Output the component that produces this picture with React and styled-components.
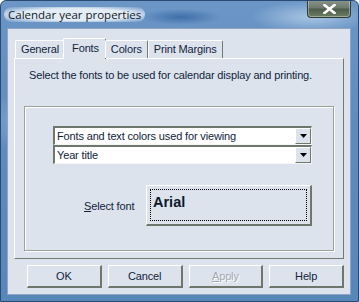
import React from 'react';
import styled, { createGlobalStyle } from 'styled-components';

const GlobalStyle = createGlobalStyle`
  html, body {
    margin: 0;
    padding: 0;
    background: #ffffff;
  }
  body {
    font-family: Tahoma, "Liberation Sans", Arial, sans-serif;
    font-size: 11px;
    letter-spacing: -0.15px;
    color: #000;
  }
`;

const Window = styled.div`
  position: relative;
  width: 359px;
  height: 302px;
  box-sizing: border-box;
  border: 1px solid #2b4a72;
  border-radius: 6px 6px 0 0;
  background:
    radial-gradient(ellipse 40px 8px at 180px 16px, #3f6ea8 0%, rgba(63, 110, 168, 0) 100%),
    radial-gradient(ellipse 60px 16px at 310px 16px, #a9c6e4 0%, rgba(169, 198, 228, 0) 100%),
    radial-gradient(ellipse 90px 30px at 40px 120px, #7ea4cf 0%, rgba(126, 164, 207, 0) 100%),
    linear-gradient(180deg, #6b96c6 0%, #5f8cbe 40%, #5786b9 100%);
  display: flex;
  flex-direction: column;
  overflow: hidden;
`;

const TitleBar = styled.div`
  height: 27px;
  display: flex;
  align-items: flex-start;
  justify-content: space-between;
  padding-left: 3px;
`;

const Title = styled.div`
  margin-top: 6px;
  font-family: "Open Sans", "Noto Sans", sans-serif;
  font-size: 11.5px;
  letter-spacing: 0;
  color: #0f1a28;
  padding: 0 4px;
  border-radius: 8px;
  background: radial-gradient(ellipse at center, #e4ecf5 55%, rgba(228, 236, 245, 0) 100%);
`;

const CloseButton = styled.div`
  width: 44px;
  height: 18px;
  margin-right: 7px;
  margin-top: -1px;
  box-sizing: border-box;
  border: 1px solid #2f3a34;
  border-top: none;
  border-radius: 0 0 4px 4px;
  background: linear-gradient(180deg, #8c968c 0%, #6d7a6c 45%, #4e5d4c 55%, #6b7f62 100%);
  box-shadow: inset 0 0 0 1px rgba(255, 255, 255, 0.35);
  display: flex;
  align-items: center;
  justify-content: center;
`;

const Client = styled.div`
  flex: 1;
  margin: 0 7px 6px 6px;
  background: #dde3ed;
  border: 1px solid #8fa5c2;
  display: flex;
  flex-direction: column;
  padding: 8px 6px 0 6px;
`;

const TabStrip = styled.div`
  display: flex;
  align-items: flex-end;
  height: 21px;
  padding-left: 1px;
  position: relative;
  z-index: 1;
`;

const Tab = styled.div`
  box-sizing: border-box;
  height: ${(p) => (p.$active ? '21px' : '18px')};
  padding: ${(p) => (p.$active ? '2px 6px 0 8px' : '1px 5px 0 5px')};
  margin: ${(p) => (p.$active ? '0 -1px -1px -2px' : '0')};
  border-top: 1px solid #ffffff;
  border-left: 1px solid #ffffff;
  border-right: 1px solid #717b71;
  border-radius: 2px 2px 0 0;
  background: #dde3ed;
  color: #10243c;
  font-size: 11px;
  line-height: 15px;
  white-space: nowrap;
`;

const Panel = styled.div`
  height: 201px;
  box-sizing: border-box;
  border-top: 1px solid #ffffff;
  border-left: 1px solid #ffffff;
  border-right: 1px solid #717b71;
  border-bottom: 1px solid #717b71;
  padding: 9px 9px 7px 9px;
  display: flex;
  flex-direction: column;
`;

const Description = styled.div`
  padding-left: 5px;
  color: #10243c;
  line-height: 14px;
`;

const GroupBox = styled.div`
  margin-top: 24px;
  flex: 1;
  border: 1px solid #9aa29a;
  box-shadow: 1px 1px 0 #ffffff, inset 1px 1px 0 #ffffff;
  padding: 19px 21px 0 28px;
  display: flex;
  flex-direction: column;
`;

const Combo = styled.div`
  height: 19px;
  box-sizing: border-box;
  background: #ffffff;
  border-top: 2px solid #6d776c;
  border-left: 2px solid #6d776c;
  border-right: 1px solid #f4f6f8;
  border-bottom: 1px solid #f4f6f8;
  display: flex;
  align-items: center;
`;

const ComboText = styled.div`
  flex: 1;
  padding-left: 2px;
  color: #10243c;
  white-space: nowrap;
  overflow: hidden;
`;

const ComboButton = styled.div`
  width: 16px;
  height: 16px;
  box-sizing: border-box;
  background: #dde3ed;
  border-top: 1px solid #ffffff;
  border-left: 1px solid #ffffff;
  border-right: 1px solid #6d776c;
  border-bottom: 1px solid #6d776c;
  display: flex;
  align-items: center;
  justify-content: center;
`;

const FontRow = styled.div`
  display: flex;
  align-items: center;
  margin-top: 21px;
  padding-left: 2px;
`;

const FontLabel = styled.div`
  width: 91px;
  padding-left: 29px;
  box-sizing: border-box;
  color: #10243c;
  u {
    text-decoration: underline;
  }
`;

const FontButton = styled.div`
  width: 166px;
  height: 41px;
  box-sizing: border-box;
  border-top: 1px solid #ffffff;
  border-left: 1px solid #ffffff;
  border-right: 2px solid #6d776c;
  border-bottom: 2px solid #6d776c;
  padding: 3px;
  display: flex;
`;

const FocusRing = styled.div`
  flex: 1;
  border: 1px dotted #000;
  display: flex;
  align-items: flex-start;
  padding: 4px 0 0 2px;
  font-family: "Liberation Sans", Arial, sans-serif;
  font-weight: bold;
  font-size: 14.5px;
  letter-spacing: 0;
  color: #0c1a2c;
`;

const ButtonRow = styled.div`
  display: flex;
  gap: 6px;
  margin-top: 6px;
  padding-left: 13px;
`;

const DialogButton = styled.div`
  width: 75px;
  height: 23px;
  box-sizing: border-box;
  border-top: 1px solid #ffffff;
  border-left: 1px solid #ffffff;
  border-right: 2px solid #6d776c;
  border-bottom: 2px solid #6d776c;
  display: flex;
  align-items: center;
  justify-content: center;
  color: ${(p) => (p.$disabled ? '#a0a8b0' : '#10243c')};
  text-shadow: ${(p) => (p.$disabled ? '1px 1px 0 #ffffff' : 'none')};
  u {
    text-decoration: underline;
  }
`;

const Arrow = () => (
  <svg width="7" height="4" viewBox="0 0 7 4">
    <path d="M0 0H7L3.5 4Z" fill="#000" />
  </svg>
);

const tabs = ['General', 'Fonts', 'Colors', 'Print Margins'];

export default function App() {
  return (
    <>
      <GlobalStyle />
      <Window>
        <TitleBar>
          <Title>Calendar year properties</Title>
          <CloseButton>
            <svg width="13" height="10" viewBox="0 0 13 10">
              <path d="M1.5 1L11.5 9M11.5 1L1.5 9" stroke="#ffffff" strokeWidth="2.6" strokeLinecap="square" />
            </svg>
          </CloseButton>
        </TitleBar>
        <Client>
          <TabStrip>
            {tabs.map((t) => (
              <Tab key={t} $active={t === 'Fonts'}>
                {t}
              </Tab>
            ))}
          </TabStrip>
          <Panel>
            <Description>Select the fonts to be used for calendar display and printing.</Description>
            <GroupBox>
              <Combo>
                <ComboText>Fonts and text colors used for viewing</ComboText>
                <ComboButton>
                  <Arrow />
                </ComboButton>
              </Combo>
              <Combo>
                <ComboText>Year title</ComboText>
                <ComboButton>
                  <Arrow />
                </ComboButton>
              </Combo>
              <FontRow>
                <FontLabel>
                  <u>S</u>elect font
                </FontLabel>
                <FontButton>
                  <FocusRing>Arial</FocusRing>
                </FontButton>
              </FontRow>
            </GroupBox>
          </Panel>
          <ButtonRow>
            <DialogButton>OK</DialogButton>
            <DialogButton>Cancel</DialogButton>
            <DialogButton $disabled>
              <span>
                <u>A</u>pply
              </span>
            </DialogButton>
            <DialogButton>Help</DialogButton>
          </ButtonRow>
        </Client>
      </Window>
    </>
  );
}
